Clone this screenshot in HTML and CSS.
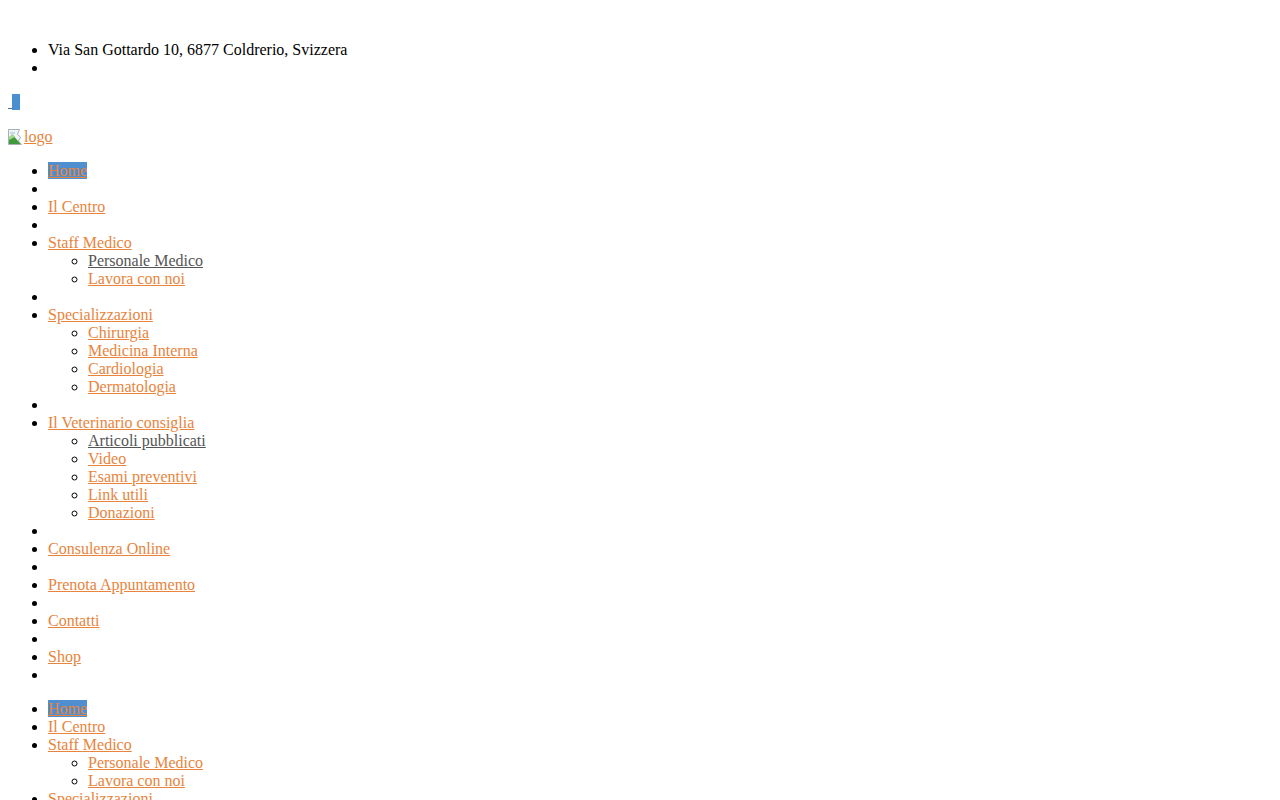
FILE: index.html
```html
<!DOCTYPE html>
<html lang="it">
<head>
    <meta charset="UTF-8">
    <meta name="viewport" content="width=device-width, initial-scale=1.0">
    <title>Clinica Veterinaria</title>
    <link rel="stylesheet" href="styles.css">
</head>
<body>
    <div class="topbar">
        <div class="spacer"></div>
        <ul>
            <li>Via San Gottardo 10, 6877 Coldrerio, Svizzera</li>
            <li></li>
        </ul>
        <div class="toggle"><a href="#">&nbsp;<span class="icon"></span></a></div>
        <div class="spacer"></div>
        <div class="logo"><a href="#"><svg class="broken" width="16" height="16" viewBox="0 0 16 16"><path d="M0.5 0.5h11l-2 5 3 2.5-2 4 3 3.5H0.5z" fill="#f1f4f7" stroke="#a7b0b8"/><path d="M1 15V8.5l3.5-3 8 9.5z" fill="#3f9a3c"/><path d="M1 8l3.5-3 2.5 3-6 3z" fill="#9fd889"/><path d="M2 3h5v2H2z" fill="#c9d8e6"/></svg>logo</a></div>
    </div>

    <ul class="menu">
        <li><a href="#" class="current">Home</a></li>
        <li></li>
        <li><a href="#">Il Centro</a></li>
        <li></li>
        <li><a href="#">Staff Medico</a>
            <ul>
                <li><a href="#" class="visited">Personale Medico</a></li>
                <li><a href="#">Lavora con noi</a></li>
            </ul>
        </li>
        <li></li>
        <li><a href="#">Specializzazioni</a>
            <ul>
                <li><a href="#">Chirurgia</a></li>
                <li><a href="#">Medicina Interna</a></li>
                <li><a href="#">Cardiologia</a></li>
                <li><a href="#">Dermatologia</a></li>
            </ul>
        </li>
        <li></li>
        <li><a href="#">Il Veterinario consiglia</a>
            <ul>
                <li><a href="#" class="visited">Articoli pubblicati</a></li>
                <li><a href="#">Video</a></li>
                <li><a href="#">Esami preventivi</a></li>
                <li><a href="#">Link utili</a></li>
                <li><a href="#">Donazioni</a></li>
            </ul>
        </li>
        <li></li>
        <li><a href="#">Consulenza Online</a></li>
        <li></li>
        <li><a href="#">Prenota Appuntamento</a></li>
        <li></li>
        <li><a href="#">Contatti</a></li>
        <li></li>
        <li><a href="#">Shop</a></li>
        <li></li>
    </ul>

    <ul class="menu">
        <li><a href="#" class="current">Home</a></li>
        <li><a href="#">Il Centro</a></li>
        <li><a href="#">Staff Medico</a>
            <ul>
                <li><a href="#">Personale Medico</a></li>
                <li><a href="#">Lavora con noi</a></li>
            </ul>
        </li>
        <li><a href="#">Specializzazioni</a>
            <ul>
                <li><a href="#">Chirurgia</a></li>
                <li><a href="#">Medicina Interna</a></li>
                <li><a href="#">Cardiologia</a></li>
                <li><a href="#">Dermatologia</a></li>
            </ul>
        </li>
        <li><a href="#">Il Veterinario consiglia</a>
            <ul>
                <li><a href="#">Articoli pubblicati</a></li>
                <li><a href="#">Video</a></li>
                <li><a href="#">Esami preventivi</a></li>
                <li><a href="#">Link utili</a></li>
                <li><a href="#">Donazioni</a></li>
            </ul>
        </li>
        <li><a href="#">Consulenza Online</a></li>
        <li><a href="#">Prenota Appuntamento</a></li>
        <li><a href="#">Contatti</a></li>
        <li><a href="#">Shop</a></li>
    </ul>
</body>
</html>
```

FILE: styles.css
```css
body {
    margin: 8px;
    font-family: "Liberation Serif", "Times New Roman", serif;
    font-size: 16px;
    line-height: 18px;
    color: #000;
    background-color: #fff;
}
ul {
    margin: 16px 0;
    padding-left: 40px;
}
ul ul {
    margin: 0;
    list-style: circle;
}
li {
    min-height: 18px;
}
a {
    color: #e8843c;
}
a.visited {
    color: #555;
}
a.current {
    background-color: #4f8fd0;
}
.spacer {
    height: 17px;
}
.toggle {
    height: 18px;
}
.toggle a {
    color: #4f6f8f;
}
.icon {
    display: inline-block;
    width: 8px;
    height: 16px;
    background-color: #4a8fd0;
    vertical-align: -3px;
}
.logo {
    height: 18px;
}
.broken {
    vertical-align: -3px;
}
```
